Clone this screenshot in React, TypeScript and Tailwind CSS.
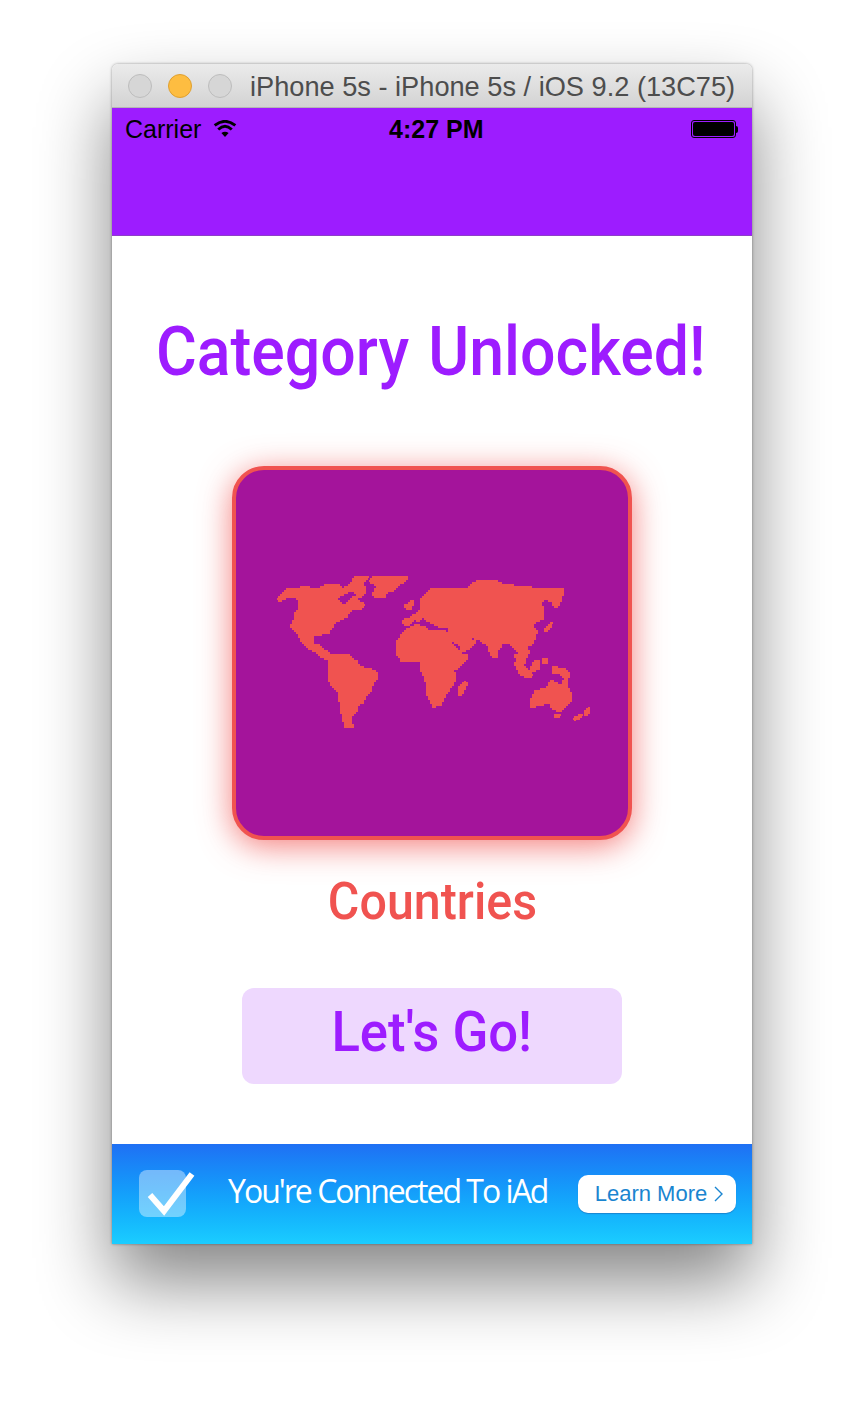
// the reference map is chunky, so snap each outline to a coarse grid with stair steps
const GRID = 6;
const snap = (n: number) => Math.round(n / GRID) * GRID;

const stepped = (d: string) => {
  const nums = d.match(/[\d.]+/g)!.map(Number);
  const pts: number[][] = [];
  for (let i = 0; i < nums.length; i += 2) pts.push([nums[i], nums[i + 1]]);
  let out = `M${snap(pts[0][0])} ${snap(pts[0][1])}`;
  pts.forEach((p, i) => {
    const q = pts[(i + 1) % pts.length];
    const n = Math.max(1, Math.ceil(Math.max(Math.abs(q[0] - p[0]), Math.abs(q[1] - p[1])) / GRID));
    for (let k = 1; k <= n; k++) {
      const x = snap(p[0] + ((q[0] - p[0]) * k) / n);
      const y = snap(p[1] + ((q[1] - p[1]) * k) / n);
      out += `H${x}V${y}`;
    }
  });
  return out + 'Z';
};

const LAND = [
  // north america
  'M38 100 L66 72 L122 68 L165 72 L178 60 L216 60 L228 72 L250 60 L272 36 L310 36 L290 58 L300 70 L300 84 L286 96 L262 72 L236 90 L208 98 L232 126 L262 96 L274 96 L275 110 L298 122 L286 132 L264 134 L238 158 L215 170 L190 206 L150 208 L140 222 L146 238 L165 245 L196 275 L190 282 L165 268 L145 252 L130 248 L105 215 L103 205 L78 180 L90 160 L92 145 L103 130 L102 100 L85 95 L65 95 L50 108 Z',
  // south america
  'M196 280 L212 268 L238 268 L262 285 L290 308 L330 320 L336 340 L322 360 L318 378 L298 395 L296 408 L276 425 L272 445 L255 458 L262 488 L245 488 L237 470 L236 450 L226 440 L226 405 L220 375 L195 345 L190 310 Z',
  // greenland, iceland, uk
  'M312 45 L325 36 L426 36 L426 42 L385 75 L362 85 L358 96 L335 96 L325 85 L335 60 Z',
  'M422 122 L436 108 L446 115 L436 130 L424 130 Z',
  'M415 165 L440 156 L445 168 L432 180 L418 180 Z',
  // eurasia
  'M465 100 L495 72 L605 72 L636 48 L690 48 L705 60 L742 62 L750 68 L795 68 L800 72 L895 72 L895 85 L878 126 L850 100 L820 110 L836 140 L836 160 L810 172 L800 185 L815 200 L805 232 L785 245 L790 265 L780 280 L765 270 L750 245 L735 235 L715 232 L695 255 L695 278 L685 278 L670 240 L650 222 L625 218 L600 200 L590 205 L612 222 L628 232 L612 250 L600 255 L575 232 L550 205 L555 185 L525 185 L498 170 L480 155 L460 165 L445 152 L470 132 L468 105 Z',
  // africa
  'M397 225 L420 195 L450 182 L475 185 L490 200 L525 195 L548 205 L550 225 L575 255 L590 268 L606 268 L606 282 L565 320 L572 345 L550 378 L525 420 L505 425 L495 400 L483 375 L484 350 L470 315 L465 290 L420 290 L397 265 Z',
  'M580 370 L598 350 L605 352 L595 385 L585 392 L580 385 Z',
  // islands
  'M750 295 L760 295 L805 332 L790 335 L770 328 Z',
  'M752 270 L778 295 L775 302 L755 282 Z',
  'M810 290 L822 285 L822 310 L805 318 L795 312 Z',
  'M836 280 L848 280 L848 292 L836 292 Z',
  'M862 305 L880 312 L895 312 L910 330 L908 340 L885 325 L865 320 Z',
  'M838 192 L860 172 L866 176 L845 198 Z',
  // australia
  'M798 405 L812 380 L838 370 L860 350 L872 352 L878 360 L892 362 L892 345 L902 345 L905 365 L916 390 L916 408 L888 438 L872 430 L855 412 L825 420 L800 425 Z',
  'M870 452 L885 450 L880 457 Z',
  'M925 460 L945 450 L952 452 L932 468 Z',
  'M958 442 L972 428 L972 445 L965 450 Z',
];

const WorldMap = () => (
  <svg width="335" height="170" viewBox="0 0 1005 510" fill="#f05350" stroke="#f05350" strokeWidth="4" shapeRendering="crispEdges">
    {LAND.map((d) => (
      <path key={d} d={stepped(d)} />
    ))}
  </svg>
);

const App = () => {
  return (
    <div className="w-[864px] h-[1404px] overflow-hidden bg-white pt-[64px] font-['Liberation_Sans',sans-serif]">
      <div className="w-[640px] ml-[112px] h-[1180px] flex flex-col rounded-t-[6px] bg-white shadow-[0_38px_72px_rgba(0,0,0,0.48),0_0_3px_rgba(0,0,0,0.4)]">
        {/* simulator title bar */}
        <div className="h-[44px] shrink-0 flex items-center rounded-t-[6px] bg-gradient-to-b from-[#ebebeb] to-[#d3d3d3] border-b border-[#b5b5b5] pl-[16px]">
          <div className="flex gap-[16px]">
            <span className="w-[24px] h-[24px] rounded-full bg-[#d6d6d6] border border-[#bdbdbd]" />
            <span className="w-[24px] h-[24px] rounded-full bg-[#fdbd41] border border-[#dfa030]" />
            <span className="w-[24px] h-[24px] rounded-full bg-[#d6d6d6] border border-[#bdbdbd]" />
          </div>
          <span className="ml-[18px] mt-[3px] text-[27.2px] leading-none text-[#4d4d4d] whitespace-nowrap">
            iPhone 5s - iPhone 5s / iOS 9.2 (13C75)
          </span>
        </div>

        {/* status + nav bar */}
        <div className="h-[128px] shrink-0 bg-[#9d1cff] border-b border-[#8d3fc8]">
          <div className="h-[42px] flex items-center relative px-[13px] text-black">
            <span className="text-[25px] leading-none">Carrier</span>
            <svg className="ml-[12px] mb-[1px]" width="24" height="18" viewBox="0 0 26 20">
              <path d="M13 19 L9 14.5 Q13 11.5 17 14.5 Z" fill="#000" />
              <path d="M5.5 10.5 Q13 3.5 20.5 10.5" fill="none" stroke="#000" strokeWidth="3.2" />
              <path d="M1.5 6 Q13 -3 24.5 6" fill="none" stroke="#000" strokeWidth="3.2" />
            </svg>
            <span className="absolute left-[277px] text-[25px] leading-none font-bold">4:27 PM</span>
            <div className="ml-auto flex items-center">
              <div className="w-[45px] h-[18px] rounded-[3px] border border-black p-[1px]">
                <div className="w-full h-full rounded-[2px] bg-black" />
              </div>
              <div className="w-[2px] h-[7px] bg-black rounded-r-[2px] mr-[1px]" />
            </div>
          </div>
        </div>

        {/* content */}
        <div className="flex-1 flex flex-col items-center">
          <h1 className="mt-[76px] mr-[3px] h-[80px] text-[68px] leading-[80px] [word-spacing:4px] scale-x-[0.92] font-medium font-['Roboto',sans-serif] text-[#9d1cff] whitespace-nowrap">
            Category Unlocked!
          </h1>
          <div className="mt-[74px] w-[400px] h-[374px] flex items-center justify-center pb-[6px] rounded-[32px] bg-[#a4149b] border-[4px] border-[#f05350] shadow-[0_6px_32px_rgba(240,83,80,0.75)]">
            <WorldMap />
          </div>
          <div className="mt-[32px] h-[60px] text-[52px] leading-[60px] scale-x-[0.93] font-medium font-['Roboto',sans-serif] text-[#f05350]">
            Countries
          </div>
          <button className="mt-[56px] w-[380px] h-[96px] pb-[8px] rounded-[12px] bg-[#eed8fe] font-['Roboto',sans-serif] text-[#9d1cff]">
            <span className="inline-block scale-x-[0.94] text-[56px] leading-none font-medium">Let's Go!</span>
          </button>
        </div>

        {/* iAd banner */}
        <div className="h-[100px] shrink-0 flex items-center relative bg-gradient-to-b from-[#1f70f4] to-[#1bcdff] pl-[27px] pr-[16px]">
          <div className="w-[47px] h-[47px] rounded-[8px] bg-white/40 mt-[-2px]" />
          <svg className="absolute left-[34px] top-[26px]" width="50" height="46" viewBox="0 0 50 46">
            <path d="M4 25 L18 41 L46 4" fill="none" stroke="#fff" strokeWidth="6" />
          </svg>
          <span className="ml-[42px] mb-[6px] text-[32px] leading-none tracking-[-2px] text-white font-['Open_Sans',sans-serif] whitespace-nowrap">
            You're Connected To iAd
          </span>
          <div className="ml-auto w-[158px] h-[38px] rounded-[10px] bg-white shadow-[0_1px_1px_#1a85d0] flex items-center justify-center pl-[4px] gap-[7px] text-[22px] leading-none text-[#1a85d0]">
            Learn More
            <svg width="9" height="16" viewBox="0 0 9 16">
              <path d="M1 1 L8 8 L1 15" fill="none" stroke="#1a85d0" strokeWidth="1.4" />
            </svg>
          </div>
        </div>
      </div>
    </div>
  );
};

export default App;
